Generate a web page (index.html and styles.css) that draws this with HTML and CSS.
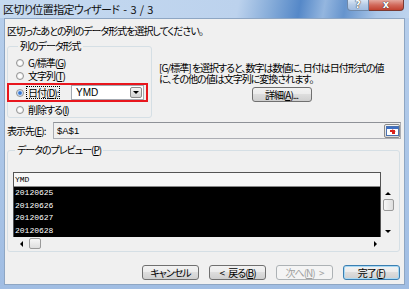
FILE: index.html
```html
<!DOCTYPE html>
<html lang="ja">
<head>
    <meta charset="UTF-8">
    <title>区切り位置指定ウィザード - 3 / 3</title>
    <link rel="stylesheet" href="styles.css">
</head>
<body>
    <div class="window">
        <!-- Title bar -->
        <div class="titlebar">
            <span class="title">区切り位置指定ウィザード - 3 / 3</span>
            <div class="caption-buttons">
                <span class="cap help">?</span>
                <span class="cap close">x</span>
            </div>
        </div>

        <div class="client">
            <p class="intro">区切ったあとの列のデータ形式を選択してください。</p>

            <div class="top-row">
                <!-- Column data format -->
                <fieldset class="group format-group">
                    <legend>列のデータ形式</legend>
                    <label class="radio"><span class="dot"></span><span>G/標準(<u>G</u>)</span></label>
                    <label class="radio"><span class="dot"></span><span>文字列(<u>T</u>)</span></label>
                    <div class="radio date-row">
                        <span class="dot on"></span>
                        <span class="focus">日付(<u>D</u>):</span>
                        <span class="combo"><span>YMD</span><span class="combo-btn"><span class="arrow-down"></span></span></span>
                    </div>
                    <label class="radio"><span class="dot"></span><span>削除する(<u>I</u>)</span></label>
                </fieldset>

                <div class="desc">
                    <p>[G/標準] を選択すると、数字は数値に、日付は日付形式の値<br>に、その他の値は文字列に変換されます。</p>
                    <span class="btn"><span>詳細(<u>A</u>)...</span></span>
                </div>
            </div>

            <div class="dest-row">
                <span class="dest-label">表示先(<u>E</u>):</span>
                <div class="refedit">
                    <span class="ref-value">$A$1</span>
                    <span class="ref-btn">
                        <svg width="13" height="10" viewBox="0 0 13 10">
                            <rect x="0.5" y="0.5" width="12" height="9" fill="#fff" stroke="#4a72b0"/>
                            <rect x="1" y="1" width="11" height="2" fill="#3e6fc2"/>
                            <path d="M4 5h5M6 4l3 2M9 7h-3" stroke="#d9231d" stroke-width="2" fill="none"/>
                        </svg>
                    </span>
                </div>
            </div>

            <!-- Data preview -->
            <fieldset class="group preview-group">
                <legend>データのプレビュー(<u>P</u>)</legend>
                <div class="preview">
                    <div class="preview-main">
                        <div class="preview-table">
                            <div class="head-row">YMD</div>
                            <div class="data-row">20120625</div>
                            <div class="data-row">20120626</div>
                            <div class="data-row">20120627</div>
                            <div class="data-row">20120628</div>
                        </div>
                        <div class="vscroll">
                            <span class="sb-btn"><span class="arrow-up"></span></span>
                            <span class="vthumb"></span>
                            <span class="sb-btn"><span class="arrow-down"></span></span>
                        </div>
                    </div>
                    <div class="hscroll">
                        <span class="sb-btn"><span class="arrow-left"></span></span>
                        <span class="hthumb"></span>
                        <span class="sb-btn right-btn"><span class="arrow-right"></span></span>
                    </div>
                </div>
            </fieldset>

            <div class="buttons">
                <span class="btn wide"><span>キャンセル</span></span>
                <span class="btn wide"><span>&lt; 戻る(<u>B</u>)</span></span>
                <span class="btn wide disabled"><span>次へ(<u>N</u>) &gt;</span></span>
                <span class="btn wide default"><span>完了(<u>F</u>)</span></span>
            </div>
        </div>
    </div>
</body>
</html>
```

FILE: styles.css
```css
body {
    margin: 0;
    font-family: "Noto Sans CJK JP", sans-serif;
    font-size: 10px;
    letter-spacing: -1px;
    font-feature-settings: "palt" 1;
    color: #000;
    white-space: nowrap;
}
u {
    text-decoration: underline;
    text-underline-offset: 1px;
}
.window {
    width: 409px;
    height: 289px;
    display: flex;
    flex-direction: column;
    background: linear-gradient(to bottom, #b7cfec, #a0bde3);
}
.titlebar {
    height: 18px;
    display: flex;
    padding: 0 5px 0 3px;
    background: linear-gradient(100deg, #c6daf0 0%, #bcd2ed 58%, #86acd9 66%, #5588c8 73%, #94b6df 79%, #6694cd 84%, #aac6e8 92%, #bed4ee 100%);
}
.title {
    line-height: 18px;
    font-size: 11px;
    letter-spacing: -0.6px;
    word-spacing: 2px;
    color: #111;
}
.caption-buttons {
    margin-left: auto;
    display: flex;
    height: 11px;
}
.cap {
    display: flex;
    align-items: center;
    justify-content: center;
    height: 11px;
    box-sizing: border-box;
    color: #fff;
    font-family: "DejaVu Sans", sans-serif;
    font-weight: bold;
    font-size: 10px;
    line-height: 10px;
    letter-spacing: 0;
    text-shadow: 0 0 1px #333, 0 0 1px #333;
}
.help {
    width: 22px;
    border: 1px solid #6f88a8;
    border-top: none;
    border-radius: 0 0 0 4px;
    background: linear-gradient(to bottom, #d9e6f5, #b5cbe6 50%, #a2bde0);
}
.close {
    width: 35px;
    border: 1px solid #7a3a33;
    border-top: none;
    border-left: none;
    border-radius: 0 0 4px 0;
    background: linear-gradient(to bottom, #e4a89e, #d2695b 50%, #c1412f);
}
.client {
    flex: 1;
    margin: 0 4px 4px;
    background: #f0f0f0;
    border: 1px solid #8ea6c3;
    display: flex;
    flex-direction: column;
}
.intro {
    margin: 5px 0 0;
    padding-left: 2px;
    line-height: 14px;
}
.top-row {
    display: flex;
    margin-top: 2px;
}
.group {
    margin: 0;
    border: 1px solid #d5dfe5;
    border-radius: 3px;
}
.group legend {
    padding: 0 2px;
    margin-left: 2px;
    line-height: 12px;
}
.format-group {
    margin-left: 2px;
    width: 145px;
    box-sizing: border-box;
    padding: 4px 0 1px 8px;
}
.radio {
    display: flex;
    align-items: center;
    height: 13px;
    line-height: 12px;
    gap: 4px;
}
.dot {
    width: 8px;
    height: 8px;
    box-sizing: border-box;
    border: 1px solid #939393;
    border-radius: 50%;
    background: radial-gradient(circle, #fff 30%, #dcdcdc);
    flex: none;
}
.dot.on {
    background: radial-gradient(circle, #1c5fbf 0, #4f8be0 35%, #cfe0f5 55%, #e8e8e8);
}
.date-row {
    height: 19px;
    width: 141px;
    box-sizing: border-box;
    margin: 1px 0 1px -9px;
    padding-left: 7px;
    border: 2px solid #e8161d;
}
.focus {
    outline: 1px dotted #000;
    line-height: 11px;
    padding: 0 1px;
    margin-left: -1px;
}
.combo {
    margin-left: auto;
    margin-right: 2px;
    width: 73px;
    height: 15px;
    box-sizing: border-box;
    border: 1px solid #a3a8b0;
    background: #fff;
    display: flex;
    align-items: center;
    padding-left: 4px;
    font-family: "Liberation Sans", sans-serif;
    font-size: 10px;
    letter-spacing: 0;
}
.combo-btn {
    margin-left: auto;
    margin-right: 1px;
    width: 12px;
    height: 11px;
    box-sizing: border-box;
    border: 1px solid #8c8c8c;
    border-radius: 2px;
    background: linear-gradient(to bottom, #f6f6f6, #e2e2e2 50%, #d2d2d2);
    display: flex;
    align-items: center;
    justify-content: center;
}
.arrow-down, .arrow-up, .arrow-left, .arrow-right {
    width: 0;
    height: 0;
    border: 3px solid transparent;
}
.arrow-down {
    border-top: 3px solid #000;
    border-bottom: none;
}
.arrow-up {
    border-bottom: 3px solid #000;
    border-top: none;
}
.arrow-left {
    border-right: 3px solid #000;
    border-left: none;
}
.arrow-right {
    border-left: 3px solid #000;
    border-right: none;
}
.desc {
    flex: 1;
    margin-left: 7px;
    padding-top: 22px;
    display: flex;
    flex-direction: column;
    align-items: center;
}
.desc p {
    margin: 0;
    align-self: stretch;
    line-height: 11px;
}
.btn {
    display: flex;
    align-items: center;
    justify-content: center;
    height: 15px;
    box-sizing: border-box;
    border: 1px solid #707070;
    border-radius: 3px;
    background: linear-gradient(to bottom, #f2f2f2, #ebebeb 50%, #dddddd 50%, #cfcfcf);
    line-height: 12px;
    word-spacing: 3px;
}
.desc .btn {
    margin-top: 3px;
    width: 60px;
}
.dest-row {
    display: flex;
    align-items: center;
    margin-top: 4px;
    padding-left: 2px;
}
.dest-label {
    width: 46px;
}
.refedit {
    flex: 1;
    height: 17px;
    margin-right: 3px;
    box-sizing: border-box;
    border: 1px solid #abadb3;
    border-top-color: #8e9197;
    background: #f0f0f0;
    display: flex;
    align-items: center;
    padding-left: 3px;
}
.ref-value {
    font-family: "Liberation Sans", sans-serif;
    font-size: 9.5px;
    letter-spacing: 0;
}
.ref-btn {
    margin-left: auto;
    width: 16px;
    height: 14px;
    box-sizing: border-box;
    border: 1px solid #8a8a8a;
    border-radius: 2px;
    background: linear-gradient(to bottom, #f4f4f4, #d9d9d9);
    display: flex;
    align-items: center;
    justify-content: center;
}
.preview-group {
    margin: 5px 4px 0 2px;
    padding: 16px 0 1px 5px;
}
.preview {
    width: 382px;
}
.preview-main {
    display: flex;
    align-items: flex-end;
}
.preview-table {
    width: 368px;
    border: 1px solid #555;
    border-bottom: none;
    box-sizing: border-box;
    font-family: "Liberation Mono", monospace;
    font-size: 8px;
    letter-spacing: 0;
}
.head-row {
    height: 13px;
    line-height: 13px;
    padding-left: 1px;
    background: #f7f7f7;
    border-bottom: 1px solid #888;
}
.data-row {
    height: 12.5px;
    line-height: 12.5px;
    padding-left: 1px;
    background: #000;
    color: #fff;
}
.vscroll {
    width: 12px;
    height: 50px;
    margin-left: 1px;
    display: flex;
    flex-direction: column;
    align-items: center;
}
.sb-btn {
    width: 12px;
    height: 12px;
    display: flex;
    align-items: center;
    justify-content: center;
}
.vthumb {
    width: 11px;
    height: 12px;
    box-sizing: border-box;
    border: 1px solid #9a9a9a;
    border-radius: 2px;
    background: linear-gradient(to right, #f7f7f7, #dedede);
}
.vscroll .sb-btn:last-child {
    margin-top: auto;
}
.hscroll {
    width: 368px;
    height: 13px;
    display: flex;
    align-items: center;
    padding-left: 2px;
    box-sizing: border-box;
}
.hthumb {
    width: 12px;
    height: 11px;
    margin-left: 2px;
    box-sizing: border-box;
    border: 1px solid #9a9a9a;
    border-radius: 2px;
    background: linear-gradient(to bottom, #f7f7f7, #dedede);
}
.right-btn {
    margin-left: auto;
}
.buttons {
    display: flex;
    justify-content: flex-end;
    gap: 10px;
    margin-top: 13px;
    padding-right: 4px;
}
.btn.wide {
    width: 57px;
}
.btn.disabled {
    border-color: #adb2b5;
    background: #f4f4f4;
    color: #a0a0a0;
}
.btn.default {
    border-color: #3c7fb1;
    box-shadow: inset 0 0 0 1px #a7d9f5;
}
```
